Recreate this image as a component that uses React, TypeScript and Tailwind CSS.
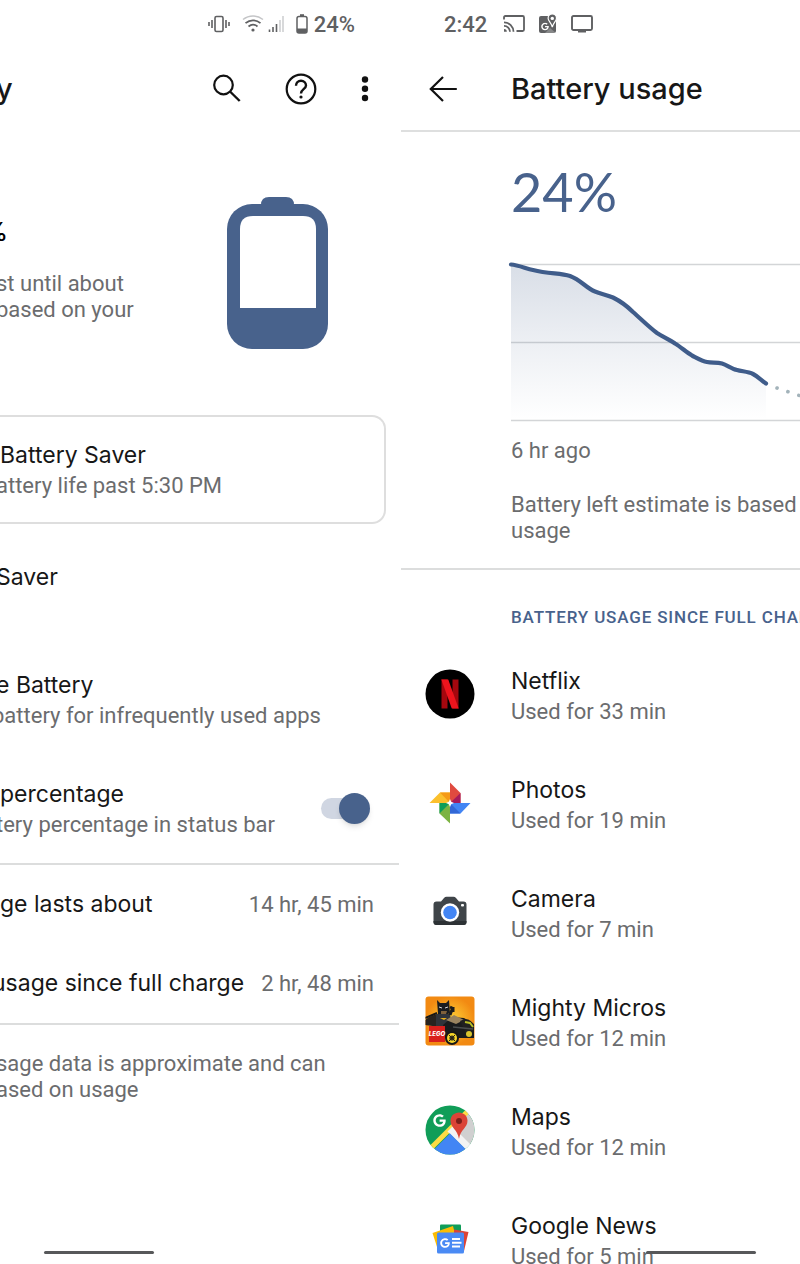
import type { ReactNode } from 'react'
import { FaGoogle } from 'react-icons/fa'

interface AppUsage {
  name: string
  used: string
  icon: ReactNode
}

function VibrateIcon() {
  return (
    <svg width="22" height="18" viewBox="0 0 22 18" fill="none" stroke="#5f6062">
      <rect x="7" y="1.5" width="8" height="15" rx="1.5" strokeWidth="1.6" />
      <path d="M4 5v8M18 5v8" strokeWidth="1.6" />
      <path d="M1 7v4M21 7v4" strokeWidth="1.6" />
    </svg>
  )
}

function WifiIcon() {
  return (
    <svg width="22" height="18" viewBox="0 0 22 18" fill="none">
      <path d="M1 4.5C7-.2 15-.2 21 4.5" stroke="#c4c5c7" strokeWidth="1.5" />
      <path d="M3.5 8.2C8 4.3 14 4.3 18.5 8.2" stroke="#5f6062" strokeWidth="1.7" />
      <path d="M6.5 11.5c2.7-2.3 6.3-2.3 9 0" stroke="#5f6062" strokeWidth="1.7" />
      <circle cx="11" cy="15" r="1.6" fill="#5f6062" />
    </svg>
  )
}

function SignalIcon() {
  return (
    <svg width="16" height="18" viewBox="0 0 16 18" strokeWidth="1.6">
      <path d="M1.5 14.5V17M5 12v5M8.5 9v8" stroke="#5f6062" />
      <path d="M12 5v12M15 1v16" stroke="#cfd0d2" />
    </svg>
  )
}

function SmallBatteryIcon() {
  return (
    <svg width="12" height="20" viewBox="0 0 12 20" fill="none">
      <path d="M4 1.2h4" stroke="#5f6062" strokeWidth="2" />
      <rect x="1" y="2.5" width="10" height="16.5" rx="2" stroke="#5f6062" strokeWidth="1.5" />
      <path d="M1 14.5h10V17a2 2 0 0 1-2 2H3a2 2 0 0 1-2-2z" fill="#5f6062" />
    </svg>
  )
}

function CastIcon() {
  return (
    <svg width="22" height="18" viewBox="0 0 22 18" fill="none" stroke="#5f6062" strokeWidth="1.8">
      <path d="M1 4.5V2.4Q1 1 2.4 1h17.2Q21 1 21 2.4v12.2q0 1.4-1.4 1.4H13.5" />
      <path d="M1 7.3a9.5 9.5 0 0 1 9.5 9.5M1 10.8a6 6 0 0 1 6 6" />
      <path d="M1 14v2.8h2.8A2.8 2.8 0 0 0 1 14z" fill="#5f6062" stroke="none" />
    </svg>
  )
}

function StatusMapsIcon() {
  return (
    <svg width="18" height="20" viewBox="0 0 18 20">
      <rect y="2" width="17" height="17" rx="2" fill="#5f6062" />
      <path d="M6 19l5-5 6 5z" fill="#fff" opacity=".25" />
      <FaGoogle x="2" y="8.5" size={8} color="#fff" />
      <path
        d="M13.3 0a4.2 4.2 0 0 1 4.2 4.2c0 3-3.2 4.2-4.2 9-1-4.8-4.200-6-4.200-9A4.200 4.200 0 0 1 13.3 0z"
        fill="#5f6062"
        stroke="#fff"
        strokeWidth="1.2"
      />
      <circle cx="13.3" cy="4.400" r="1.7" fill="#fff" />
    </svg>
  )
}

function MonitorIcon() {
  return (
    <svg width="22" height="18" viewBox="0 0 22 18" fill="none" stroke="#5f6062" strokeWidth="1.9">
      <rect x="1" y="1" width="20" height="14" rx="1.5" />
      <path d="M7 16.5h8" strokeWidth="2" />
    </svg>
  )
}

function SearchIcon() {
  return (
    <svg width="32" height="32" viewBox="0 0 32 32" fill="none" stroke="#111" strokeWidth="2.2">
      <circle cx="12.5" cy="12" r="9.3" />
      <path d="M19 18.5l9.7 9.5" strokeWidth="2.4" />
    </svg>
  )
}

function HelpIcon() {
  return (
    <svg width="32" height="32" viewBox="0 0 32 32" fill="none" stroke="#111" strokeWidth="2.2">
      <circle cx="16" cy="16" r="14.3" />
      <path d="M11 12.7c0-3 2.2-5 5-5s5 2 5 4.7c0 3.6-5 4-5 8" strokeWidth="2.4" />
      <circle cx="16" cy="24" r="1.6" fill="#111" stroke="none" />
    </svg>
  )
}

function MoreIcon() {
  return (
    <svg width="32" height="32" viewBox="0 0 32 32" fill="#111">
      <circle cx="16" cy="6.5" r="3.2" />
      <circle cx="16" cy="15.8" r="3.2" />
      <circle cx="16" cy="25" r="3.2" />
    </svg>
  )
}

function BackIcon() {
  return (
    <svg width="28" height="28" viewBox="0 0 28 28" fill="none" stroke="#111" strokeWidth="2.2">
      <path d="M14 2L1.8 14 14 26M1.8 14h26" />
    </svg>
  )
}

function BigBattery() {
  return (
    <svg width="102" height="153" viewBox="0 0 102 153" role="img" aria-label="Battery level">
      <path d="M34 12V8q0-8 8-8h17q8 0 8 8v4z" fill="#48628c" />
      <rect y="7" width="101" height="145" rx="25" fill="#48628c" />
      <path d="M13 111V32q0-13 13-13h50q13 0 13 13v79z" fill="#fff" />
    </svg>
  )
}

const CURVE =
  'M0 4.5C7 5 15 8.5 22 10C38 14 49 13 59 16C70 20 75 28 84 31.5C90 34 95 34.5 102 37.5C109 41 115 45 122 52C130 59 138 67 146 73C152 77 158 79 164 83.5C170 87 175 92 181 95.5C186 98 191 101 196 102C201 103 206 102 211 103.5C216 105 221 109 226 110C231 111.5 237 111.5 242 114C247 116.5 250 120 255 123.5'

function UsageChart() {
  return (
    <svg className="h-[164px] w-full overflow-visible" fill="none" role="img" aria-label="Battery level over time">
      <defs>
        <linearGradient id="fade" x1="0" y1="0" x2="0" y2="1">
          <stop offset="0" stopColor="#48628c" stopOpacity=".21" />
          <stop offset=".5" stopColor="#48628c" stopOpacity=".1" />
          <stop offset="1" stopColor="#48628c" stopOpacity="0" />
        </linearGradient>
      </defs>
      <path d="M0 4.5H1600M0 82.5H1600M0 160.5H1600" stroke="#d3d5d7" strokeWidth="1.5" />
      <path d={`${CURVE}V160H0Z`} fill="url(#fade)" />
      <path d={CURVE} stroke="#3f5c8a" strokeWidth="4.2" strokeLinecap="round" />
      <path d="M266 128L300 139.5" stroke="#a3b3ba" strokeWidth="3.6" strokeLinecap="round" strokeDasharray="0.1 11.4" />
    </svg>
  )
}

function NetflixIcon() {
  return (
    <svg width="50" height="50" viewBox="0 0 50 50">
      <defs>
        <clipPath id="ribbon">
          <rect x="16" y="10.5" width="18" height="29" />
        </clipPath>
      </defs>
      <circle cx="25" cy="25" r="24.5" fill="#000" />
      <g clipPath="url(#ribbon)">
        <path d="M19.5 10v30M30.5 10v30" stroke="#a5070e" strokeWidth="6" />
        <path d="M18.2 6l13.6 38" stroke="#ee141d" strokeWidth="6.5" />
      </g>
    </svg>
  )
}

function PhotosIcon() {
  return (
    <svg width="50" height="50" viewBox="0 0 50 50">
      <path d="M25 4.5L35.5 15v10H25z" fill="#e04a3f" />
      <path d="M25 25l10.5-10v10z" fill="#a61c5c" />
      <path d="M45.5 25L35.5 35.500H25V25z" fill="#4285f4" />
      <path d="M25 25l10.5 10.5H25z" fill="#3267d6" />
      <path d="M25 45.5L14.5 35.5V25H25z" fill="#7cb342" />
      <path d="M25 25L14.5 35.5V25z" fill="#0f9d58" />
      <path d="M4.5 25L15 14.5h10V25z" fill="#fbc02d" />
      <path d="M25 25L15 14.5h10z" fill="#f59a16" />
      <path d="M25 21l1.2 2.8L29 25l-2.8 1.2L25 29l-1.2-2.8L21 25l2.800-1.2z" fill="#fff" />
    </svg>
  )
}

function CameraIcon() {
  return (
    <svg width="50" height="50" viewBox="0 0 50 50">
      <path
        d="M11.5 14.5H16l3-3.500q1-1.200 2.5-1.200h7q1.5 0 2.5 1.200l3 3.5h4.5q3 0 3 3V35q0 3-3 3h-27q-3 0-3-3V17.5q0-3 3-3z"
        fill="#3f4549"
      />
      <path d="M8.5 34v1q0 3 3 3h27q3 0 3-3v-1z" fill="#2d3235" />
      <circle cx="25" cy="25.5" r="9.2" fill="#fff" />
      <circle cx="25" cy="25.5" r="6.8" fill="#4285f4" />
      <rect x="36" y="17" width="3" height="2.5" rx="1" fill="#fff" />
    </svg>
  )
}

function MightyMicrosIcon() {
  return (
    <svg width="50" height="50" viewBox="0 0 50 50">
      <defs>
        <radialGradient id="glow">
          <stop offset="0" stopColor="#ffd83a" />
          <stop offset="1" stopColor="#f28a12" />
        </radialGradient>
        <clipPath id="tile">
          <rect x="0.5" y="0.5" width="49" height="49" rx="3" />
        </clipPath>
      </defs>
      <g clipPath="url(#tile)">
        <rect width="50" height="50" fill="url(#glow)" />
        <path d="M0 24q6-5 13-6l6 5-4 8-15-2z" fill="#28231f" />
        <path d="M0 22l12-5" stroke="#171717" strokeWidth="2" />
        <path d="M12 4l3 3h6l3-3 1 13q-6 4-12 1z" fill="#191c20" />
        <path d="M14 11l3 1M20 12l3-1" stroke="#d8d8d8" />
        <path d="M16 15h6l-1 3h-5z" fill="#80613b" />
        <path d="M11 18h14l2 12H11z" fill="#30343a" />
        <path d="M15 22h7l-3 2z" fill="#e9b11d" />
        <path d="M25 19l3-8M25 11l4 2M28 11v5" stroke="#1c1c1c" strokeWidth="3" />
        <path d="M18 29l9-8 12 1 10 6v14H20z" fill="#191b1c" />
        <path d="M21 24l8-5 10 5-8 4z" fill="#9a8460" />
        <path d="M35 25q9-5 14 4v5l-8 3" fill="#202020" />
        <path d="M40 26l5 1 3 4" stroke="#b8bd24" strokeWidth="2" fill="none" />
        <path d="M28 31l20 2" stroke="#4a4d4d" strokeWidth="1.5" />
        <circle cx="27" cy="42" r="7" fill="#171717" />
        <circle cx="27" cy="42" r="5" fill="#f6d629" />
        <circle cx="27" cy="42" r="2.6" fill="#3b351c" />
        <path d="M24 39l6 6M30 39l-6 6" stroke="#272313" />
        <circle cx="44" cy="38" r="3" fill="#d9c52d" />
        <rect x="4" y="30" width="16" height="16" fill="#d9201c" />
        <text
          x="12"
          y="40"
          textAnchor="middle"
          fontFamily="Inter, sans-serif"
          fontSize="6"
          fontWeight="800"
          fontStyle="italic"
          fill="#fff"
        >
          LEGO
        </text>
      </g>
    </svg>
  )
}

function MapsIcon() {
  return (
    <svg width="50" height="50" viewBox="0 0 50 50">
      <defs>
        <clipPath id="disc">
          <circle cx="25" cy="25" r="24.5" />
        </clipPath>
      </defs>
      <g clipPath="url(#disc)">
        <rect width="50" height="50" fill="#109d58" />
        <path d="M46 4L25 25l24 24h6V0z" fill="#d0d0d0" />
        <path d="M2 47L45 4" stroke="#fddc45" strokeWidth="5" />
        <path d="M25 24l24 24" stroke="#f3f3f3" strokeWidth="7" />
        <path d="M25 28.5L2 51.5h46z" fill="#4285f4" />
        <FaGoogle x="8" y="9" size={13} color="#fff" />
        <path
          d="M34 7.5c4.700 0 8.5 3.6 8.5 8.2C42.5 23 35.5 24 34 34c-1.5-10-8.5-11-8.5-18.3 0-4.600 3.8-8.200 8.5-8.200z"
          fill="#db4437"
        />
        <circle cx="34" cy="16" r="3" fill="#7b1f1a" />
      </g>
    </svg>
  )
}

function NewsIcon() {
  return (
    <svg width="50" height="50" viewBox="0 0 50 50">
      <rect x="15" y="10.5" width="21" height="14" rx="1" fill="#0f9d58" />
      <path d="M7.500 19l20.500-7 4 16-19 8z" fill="#fbbc04" />
      <path d="M29 15.500l14.500 2.500-4.500 19H29z" fill="#db4437" />
      <rect x="12" y="18.5" width="27" height="21" rx="1.5" fill="#4a8af4" />
      <FaGoogle x="15" y="24" size={10} color="#fff" />
      <path d="M27 25h8M27 28.8h9.5M27 32.600h8" stroke="#fff" strokeWidth="2" />
    </svg>
  )
}

const apps: AppUsage[] = [
  { name: 'Netflix', used: 'Used for 33 min', icon: <NetflixIcon /> },
  { name: 'Photos', used: 'Used for 19 min', icon: <PhotosIcon /> },
  { name: 'Camera', used: 'Used for 7 min', icon: <CameraIcon /> },
  { name: 'Mighty Micros', used: 'Used for 12 min', icon: <MightyMicrosIcon /> },
  { name: 'Maps', used: 'Used for 12 min', icon: <MapsIcon /> },
  { name: 'Google News', used: 'Used for 5 min', icon: <NewsIcon /> },
]

interface RowTextProps {
  title: string
  detail: string
  detailClass?: string
}

function RowText({ title, detail, detailClass = '' }: RowTextProps) {
  return (
    <span className="block whitespace-nowrap">
      <span className="block font-[Inter,sans-serif] text-[23px] leading-8 text-[#171717]">{title}</span>
      <span className={`block text-[22px] leading-[30px] text-[#6b6c6e] ${detailClass}`}>{detail}</span>
    </span>
  )
}

function GestureBar({ className }: { className: string }) {
  return <div className={`absolute bottom-[10px] h-[3px] w-[110px] rounded-full bg-[#57585a] ${className}`} />
}

function BatteryScreen() {
  return (
    <section className="relative mr-px h-full overflow-hidden">
      <div className="flex h-12 items-center justify-end pr-11 text-[22px] font-medium text-[#5f6062]">
        <VibrateIcon />
        <span className="ml-3">
          <WifiIcon />
        </span>
        <span className="ml-1">
          <SignalIcon />
        </span>
        <span className="ml-3">
          <SmallBatteryIcon />
        </span>
        <span className="ml-[6px]">24%</span>
      </div>
      <header className="flex h-[82px] items-center pr-[18px]">
        <h1 className="-ml-1 font-[Inter,sans-serif] text-[29px] font-medium text-[#171717]">y</h1>
        <button type="button" aria-label="Search" className="mr-[42px] ml-auto">
          <SearchIcon />
        </button>
        <button type="button" aria-label="Help" className="mr-8">
          <HelpIcon />
        </button>
        <button type="button" aria-label="More options">
          <MoreIcon />
        </button>
      </header>

      <div className="flex h-[285px] items-start justify-between pt-[67px] pr-[70px]">
        <div className="pt-[15px]">
          <div className="flex w-2 justify-end overflow-hidden font-[Inter,sans-serif] text-[26px] leading-10 font-medium text-black">
            %
          </div>
          <p className="-ml-1 pt-[19px] text-[22px] leading-[26px] whitespace-nowrap text-[#6b6c6e]">
            st until about
            <br />
            based on your
          </p>
        </div>
        <BigBattery />
      </div>

      <button
        type="button"
        className="flex h-[109px] w-[calc(100%-13px)] items-center rounded-r-[14px] border-y-2 border-r-2 border-[#dedede] text-left"
      >
        <RowText title="Battery Saver" detail="attery life past 5:30 PM" detailClass="-ml-1" />
      </button>
      <button
        type="button"
        className="mb-[15px] -ml-1 flex h-[106px] w-full items-center font-[Inter,sans-serif] text-[23px] leading-8 text-[#171717]"
      >
        Saver
      </button>
      <button type="button" className="-ml-1 flex h-[109px] w-full items-center text-left">
        <RowText title="e Battery" detail="battery for infrequently used apps" detailClass="-ml-1" />
      </button>
      <label className="flex h-[109px] items-center justify-between pr-[29px]">
        <RowText title="percentage" detail="tery percentage in status bar" detailClass="-ml-1" />
        <input
          type="checkbox"
          role="switch"
          defaultChecked
          className="grid h-8 w-[49px] appearance-none items-center before:col-start-1 before:row-start-1 before:h-[21px] before:w-[42px] before:rounded-full before:bg-[#d0d6e2] before:content-[''] after:col-start-1 after:row-start-1 after:size-[31px] after:rounded-full after:bg-[#48628c] after:shadow-md after:content-[''] checked:after:justify-self-end"
        />
      </label>

      <dl className="border-y-2 border-[#dcdddd] text-[#171717]">
        <div className="flex h-[79px] items-center justify-between pr-[25px] whitespace-nowrap">
          <dt className="font-[Inter,sans-serif] text-[23px]">ge lasts about</dt>
          <dd className="text-[22px] text-[#6b6c6e]">14 hr, 45 min</dd>
        </div>
        <div className="flex h-[79px] items-center justify-between pr-[25px] whitespace-nowrap">
          <dt className="-ml-2 font-[Inter,sans-serif] text-[23px]">usage since full charge</dt>
          <dd className="text-[22px] text-[#6b6c6e]">2 hr, 48 min</dd>
        </div>
      </dl>
      <p className="-ml-1 pt-[26px] text-[22px] leading-[26px] text-[#6b6c6e]">
        sage data is approximate and can
        <br />
        ased on usage
      </p>
      <GestureBar className="left-11" />
    </section>
  )
}

function UsageScreen() {
  return (
    <section className="relative h-full overflow-hidden pl-px">
      <div className="flex h-12 items-center pl-[43px] text-[22px] font-medium text-[#5f6062]">
        <span className="mr-4">2:42</span>
        <CastIcon />
        <span className="mx-[14px]">
          <StatusMapsIcon />
        </span>
        <MonitorIcon />
      </div>
      <header className="flex h-[84px] items-center border-b-2 border-[#dedfdf] pl-7">
        <button type="button" aria-label="Back">
          <BackIcon />
        </button>
        <h1 className="pl-[54px] font-[Inter,sans-serif] text-[29px] font-medium whitespace-nowrap text-[#171717]">
          Battery usage
        </h1>
      </header>

      <div className="border-b-2 border-[#dcdddd] pt-[30px] pb-6 pl-[110px]">
        <div className="font-[Lato,sans-serif] text-[54px] leading-[60px] text-[#48628c]">24%</div>
        <div className="pt-[38px]">
          <UsageChart />
        </div>
        <p className="pt-3 text-[22px] leading-[30px] text-[#6b6c6e]">6 hr ago</p>
        <p className="pt-[26px] text-[22px] leading-[26px] whitespace-nowrap text-[#6b6c6e]">
          Battery left estimate is based on your
          <br />
          usage
        </p>
      </div>

      <h2 className="pt-[33px] pb-[9px] pl-[110px] text-[17px] leading-7 font-medium tracking-wider whitespace-nowrap text-[#48628c]">
        BATTERY USAGE SINCE FULL CHARGE
      </h2>
      <ul>
        {apps.map(app => (
          <li key={app.name}>
            <button type="button" className="flex h-[109px] w-full items-center gap-9 pb-[2px] pl-6 text-left">
              {app.icon}
              <span className="pt-1">
                <RowText title={app.name} detail={app.used} />
              </span>
            </button>
          </li>
        ))}
      </ul>
      <GestureBar className="left-[246px]" />
    </section>
  )
}

function App() {
  return (
    <main className="grid h-screen grid-cols-2 bg-white font-[Roboto,sans-serif]">
      <BatteryScreen />
      <UsageScreen />
    </main>
  )
}

export default App
